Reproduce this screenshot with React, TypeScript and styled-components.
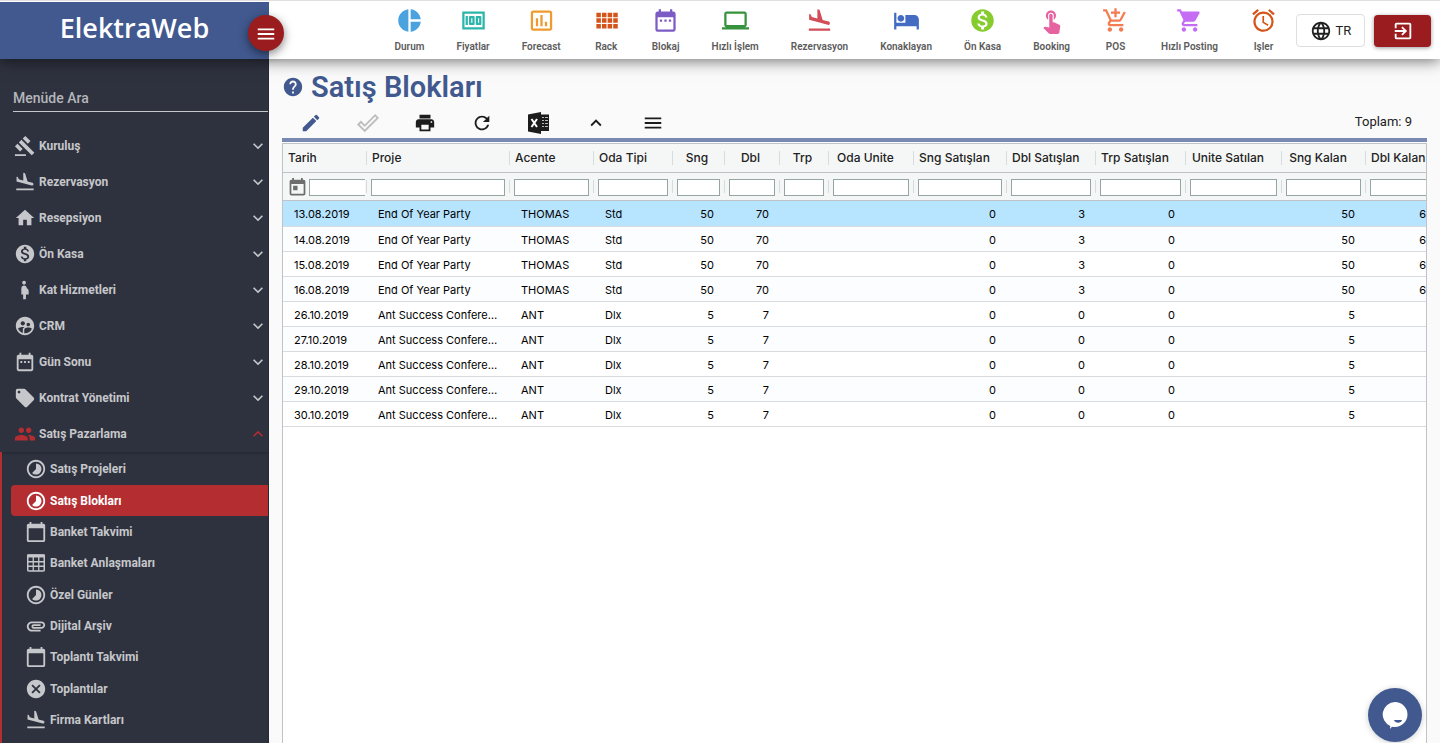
import React from "react";
import styled, { createGlobalStyle, css } from "styled-components";
import type { IconType } from "react-icons";
import {
  MdAccessAlarm, MdAddShoppingCart, MdAttachment, MdCalendarToday, MdCancel, MdDateRange, MdDoneOutline,
  MdEdit, MdExitToApp, MdFlightLand, MdGavel, MdHelp, MdHome, MdHotel, MdInsertChartOutlined,
  MdKeyboardArrowDown, MdKeyboardArrowUp, MdLanguage, MdLaptop, MdLocalOffer, MdMenu, MdMoney,
  MdMonetizationOn, MdPeople, MdPregnantWoman, MdPrint, MdRefresh, MdShoppingCart,
  MdSupervisedUserCircle, MdTimelapse, MdToday, MdTouchApp,
} from "react-icons/md";

const navy = "#41598f";
const red = "#9b1c1f";
const accent = "#b32d31";

const GlobalStyle = createGlobalStyle`
  *, *::before, *::after { box-sizing: border-box; }
  body { margin: 0; font-family: Roboto, "Liberation Sans", sans-serif; background: #fafafa; color: #212121; }
  button, input { font: inherit; color: inherit; }
  button { cursor: pointer; padding: 0; border: 0; background: none; }
  a { color: inherit; text-decoration: none; }
  ul { list-style: none; margin: 0; padding: 0; }
`;

const Shell = styled.div`
  display: flex;
  flex-direction: column;
  height: 100vh;
  overflow: hidden;
`;

const TopBar = styled.header`
  position: relative;
  z-index: 2;
  display: flex;
  flex: none;
  height: 59px;
  background: #fff;
  border-top: 1px solid #e0e0e0;
  box-shadow: 0 2px 14px rgba(0, 0, 0, 0.55);
`;

const Brand = styled.div`
  position: relative;
  display: flex;
  flex: none;
  justify-content: center;
  width: 269px;
  margin-top: 1px;
  background: ${navy};
`;

const BrandName = styled.span`
  font: 600 27px/51px "Open Sans", sans-serif;
  color: #fff;
`;

const MenuToggle = styled.button`
  position: absolute;
  right: -15px;
  top: 13px;
  display: grid;
  place-items: center;
  width: 36px;
  height: 36px;
  padding-top: 2px;
  border-radius: 50%;
  background: ${red};
  color: #fff;
  box-shadow: 0 3px 10px rgba(0, 0, 0, 0.5);
`;

const Shortcuts = styled.nav`
  display: flex;
  flex: 1;
  justify-content: flex-end;
  gap: 32px;
  padding: 6px 19px 0 0;
`;

const Shortcut = styled.a<{ $color: string }>`
  display: flex;
  flex-direction: column;
  align-items: center;
  gap: 7px;
  font-size: 10px;
  font-weight: 600;
  line-height: 12px;
  color: #5c5c5c;
  white-space: nowrap;
  svg { color: ${(p) => p.$color}; }
`;

const TopActions = styled.div`
  display: flex;
  flex: none;
  gap: 9px;
  padding: 13px 9px 0 0;
`;

const LanguageButton = styled.button`
  display: flex;
  align-items: center;
  justify-content: center;
  gap: 4px;
  width: 69px;
  height: 33px;
  border: 1px solid #dedede;
  border-radius: 4px;
  font-size: 13px;
`;

const ExitButton = styled.button`
  display: grid;
  place-items: center;
  width: 57px;
  height: 32px;
  margin-top: 1px;
  border-radius: 4px;
  background: ${red};
  color: #fff;
  box-shadow: 0 1px 4px rgba(0, 0, 0, 0.4);
`;

const Body = styled.div`
  display: flex;
  flex: 1;
  min-height: 0;
`;

const Sidebar = styled.aside`
  flex: none;
  width: 269px;
  overflow: hidden;
  background: #2e323f;
  color: #c6c7ca;
  border-right: 1px solid #262a35;
`;

const MenuSearch = styled.input`
  display: block;
  width: 255px;
  height: 29px;
  margin: 24px 0 16px 13px;
  padding: 2px 0 0;
  border: 0;
  border-bottom: 1px solid #c6c7ca;
  outline: 0;
  background: none;
  font-size: 14px;
  font-weight: 500;
  &::placeholder { color: #b5b6ba; opacity: 1; }
`;

const MenuLink = styled.a<{ $open?: boolean }>`
  display: flex;
  align-items: center;
  gap: 3px;
  height: 36px;
  padding-left: 14px;
  font-size: 12px;
  font-weight: 700;
  ${(p) => p.$open && css`svg { color: ${accent}; }`}
`;

const MenuLabel = styled.span`
  flex: 1;
`;

const SubMenu = styled.ul`
  border-left: 2px solid ${accent};
  padding: 1px 0 9px 9px;
  box-shadow: inset 0 2px 2px rgba(0, 0, 0, 0.15);
`;

const SubLink = styled.a<{ $active?: boolean }>`
  display: flex;
  align-items: center;
  gap: 3px;
  height: 31px;
  padding-left: 14px;
  border-radius: 4px 0 0 4px;
  font-size: 12px;
  font-weight: 700;
  ${(p) => p.$active && css`background: ${accent}; color: #fff;`}
`;

const SubItem = styled.li`
  &:nth-child(3n + 1) { padding-bottom: 1px; }
`;

const Main = styled.main`
  display: flex;
  flex: 1;
  flex-direction: column;
  min-width: 0;
  padding: 9px 13px 0;
`;

const Heading = styled.div`
  display: flex;
  align-items: center;
  gap: 7px;
  height: 37px;
  color: ${navy};
`;

const Title = styled.h1`
  margin: 0;
  font-size: 29px;
  font-weight: 600;
  line-height: 38px;
`;

const Toolbar = styled.div`
  display: flex;
  align-items: center;
  justify-content: space-between;
  height: 37px;
  padding-right: 15px;
  border-bottom: 4px solid #788ab2;
`;

const Tools = styled.div`
  display: flex;
  padding-top: 2px;
`;

const Tool = styled.button<{ $color?: string }>`
  display: grid;
  place-items: center;
  width: 57px;
  height: 31px;
  color: ${(p) => p.$color ?? "#1c1c1c"};
`;

const Total = styled.span`
  font-size: 13px;
`;

const GridFrame = styled.div`
  flex: 1;
  min-height: 0;
  margin-top: 1px;
  overflow: hidden;
  border: 1px solid #bdc3c7;
  border-bottom: 0;
  background: #fff;
`;

const Grid = styled.table`
  width: 1154px;
  border-collapse: collapse;
  table-layout: fixed;
  font-family: Inter, "Liberation Sans", sans-serif;
  font-size: 11px;
  color: #000;
`;

const HeadRow = styled.tr`
  height: 28px;
  background: #f5f7f7;
  border-bottom: 1px solid #bdc3c7;
`;

const HeadCell = styled.th<{ $align?: string; $gutter?: number }>`
  position: relative;
  padding: 0 ${(p) => p.$gutter ?? 5}px 0 5px;
  font-size: 12px;
  font-weight: 500;
  text-align: ${(p) => p.$align ?? "left"};
  white-space: nowrap;
  color: #222;
  &::after {
    content: "";
    position: absolute;
    right: 0;
    top: 7px;
    bottom: 7px;
    border-right: 1px solid #d9dcde;
  }
`;

const FilterBox = styled.div`
  display: flex;
  align-items: center;
  gap: 1px;
  margin-right: -3px;
  color: #6d6d6d;
  svg { flex: none; }
`;

const FilterInput = styled.input`
  flex: 1;
  min-width: 0;
  width: 100%;
  height: 17px;
  padding: 0 2px;
  border: 1px solid #95a5a6;
  background: #fff;
  font-size: 11px;
`;

const DateFilterInput = styled(FilterInput)`
  border-right: 0;
`;

const FilterCell = styled(HeadCell)`
  padding: 2px 5px 0 4px;
`;

const Row = styled.tr<{ $selected?: boolean }>`
  height: ${(p) => (p.$selected ? 26 : 25)}px;
  border-bottom: 1px solid #d9dcde;
  &:nth-child(even) { background: #fcfdfe; }
  ${(p) => p.$selected && css`background: #b7e4ff;`}
`;

const Cell = styled.td<{ $align: string }>`
  padding: 2px 11px 0;
  overflow: hidden;
  text-align: ${(p) => p.$align};
  text-overflow: ellipsis;
  white-space: nowrap;
`;

const ChatButton = styled.button`
  position: fixed;
  right: 18px;
  bottom: 1px;
  z-index: 3;
  display: grid;
  place-items: center;
  width: 54px;
  height: 54px;
  border-radius: 50%;
  background: ${navy};
  box-shadow: 0 1px 6px rgba(0, 0, 0, 0.2);
`;

const PieIcon = () => (
  <svg width="27" height="27" viewBox="0 0 24 24" fill="currentColor" aria-hidden="true">
    <path d="M11 2v20c-5.07-.5-9-4.79-9-10s3.93-9.5 9-10zm2.03 0v8.99H22c-.47-4.74-4.24-8.52-8.97-8.99zm0 11.01V22c4.74-.47 8.5-4.25 8.97-8.99h-8.97z" />
  </svg>
);

const RackIcon = () => (
  <svg width="27" height="27" viewBox="0 0 24 24" fill="currentColor" aria-hidden="true">
    <path d="M3 9h4V5H3v4zm0 5h4v-4H3v4zm5 0h4v-4H8v4zm5 0h4v-4h-4v4zM8 9h4V5H8v4zm5-4v4h4V5h-4zm5 9h4v-4h-4v4zM3 19h4v-4H3v4zm5 0h4v-4H8v4zm5 0h4v-4h-4v4zm5 0h4v-4h-4v4zm0-14v4h4V5h-4z" />
  </svg>
);

const SheetIcon = () => (
  <svg width="22" height="22" viewBox="0 0 22 22" fill="none" stroke="currentColor" aria-hidden="true">
    <rect x="2.75" y="3" width="16.500" height="16" rx="1" strokeWidth="1.500" />
    <path d="M2 4h18" strokeWidth="3" />
    <path d="M2 9.750h18M2 14.250h18M8.250 5v14M13.750 5v14" strokeWidth="1.300" />
  </svg>
);

const ExcelIcon = () => (
  <svg width="22" height="22" viewBox="0 0 22 22" aria-hidden="true">
    <path d="M0 2.500 13 0v22L0 19.500z" fill="#1c1c1c" />
    <path d="M13 2.500h8v16.500h-8z" fill="#1c1c1c" />
    <path d="M14 5.500h2m1 0h3m-6 3h2m1 0h3m-6 3h2m1 0h3m-6 3h2m1 0h3" stroke="#b9b9b9" strokeWidth="1" />
    <path d="m3.500 7 5.500 8M9 7l-5.500 8" stroke="#fff" strokeWidth="2" />
  </svg>
);

const ChatIcon = () => (
  <svg width="28" height="28" viewBox="0 0 28 28" aria-hidden="true">
    <path d="M14 1a12.500 12.500 0 0 1 0 25c-1 0-2 0-3-.3L9 28l.3-3A12.500 12.500 0 0 1 14 1z" fill="#fff" />
    <path d="M13 19h8c-.5 3.500-7 3.500-8 0z" fill={navy} />
  </svg>
);

const shortcuts: { label: string; color: string; icon: IconType | React.FC }[] = [
  { label: "Durum", color: "#4aa3df", icon: PieIcon },
  { label: "Fiyatlar", color: "#2bb5ab", icon: MdMoney },
  { label: "Forecast", color: "#ef9a2d", icon: MdInsertChartOutlined },
  { label: "Rack", color: "#d4541a", icon: RackIcon },
  { label: "Blokaj", color: "#7c5cc4", icon: MdDateRange },
  { label: "Hızlı İşlem", color: "#35923d", icon: MdLaptop },
  { label: "Rezervasyon", color: "#d24d57", icon: MdFlightLand },
  { label: "Konaklayan", color: "#446cc3", icon: MdHotel },
  { label: "Ön Kasa", color: "#87cc2f", icon: MdMonetizationOn },
  { label: "Booking", color: "#e663a0", icon: MdTouchApp },
  { label: "POS", color: "#f47b52", icon: MdAddShoppingCart },
  { label: "Hızlı Posting", color: "#c56cf5", icon: MdShoppingCart },
  { label: "Işler", color: "#d4541a", icon: MdAccessAlarm },
];

const menu: { label: string; icon: IconType; open?: boolean }[] = [
  { label: "Kuruluş", icon: MdGavel },
  { label: "Rezervasyon", icon: MdFlightLand },
  { label: "Resepsiyon", icon: MdHome },
  { label: "Ön Kasa", icon: MdMonetizationOn },
  { label: "Kat Hizmetleri", icon: MdPregnantWoman },
  { label: "CRM", icon: MdSupervisedUserCircle },
  { label: "Gün Sonu", icon: MdDateRange },
  { label: "Kontrat Yönetimi", icon: MdLocalOffer },
  { label: "Satış Pazarlama", icon: MdPeople, open: true },
];

const subMenu: { label: string; icon: IconType | React.FC; active?: boolean }[] = [
  { label: "Satış Projeleri", icon: MdTimelapse },
  { label: "Satış Blokları", icon: MdTimelapse, active: true },
  { label: "Banket Takvimi", icon: MdCalendarToday },
  { label: "Banket Anlaşmaları", icon: SheetIcon },
  { label: "Özel Günler", icon: MdTimelapse },
  { label: "Dijital Arşiv", icon: MdAttachment },
  { label: "Toplantı Takvimi", icon: MdCalendarToday },
  { label: "Toplantılar", icon: MdCancel },
  { label: "Firma Kartları", icon: MdFlightLand },
];

const columns = [
  { label: "Tarih", width: 84 },
  { label: "Proje", width: 143 },
  { label: "Acente", width: 84 },
  { label: "Oda Tipi", width: 79 },
  { label: "Sng", width: 52, numeric: true },
  { label: "Dbl", width: 55, numeric: true },
  { label: "Trp", width: 49, numeric: true },
  { label: "Oda Unite", width: 85, numeric: true },
  { label: "Sng Satışlan", width: 93, numeric: true },
  { label: "Dbl Satışlan", width: 89, numeric: true },
  { label: "Trp Satışlan", width: 90, numeric: true },
  { label: "Unite Satılan", width: 96, numeric: true },
  { label: "Sng Kalan", width: 84, numeric: true },
  { label: "Dbl Kalan", width: 71, numeric: true },
];

const gutterOf = (c: { width: number; numeric?: boolean }) => (!c.numeric ? 5 : c.width < 60 ? 9 : 17);

const party = ["End Of Year Party", "THOMAS", "Std", "50", "70", "", "", "0", "3", "0", "", "50", "6"];
const conference = ["Ant Success Conference", "ANT", "Dlx", "5", "7", "", "", "0", "0", "0", "", "5", ""];
const rows = [
  ...["13.08.2019", "14.08.2019", "15.08.2019", "16.08.2019"].map((date) => [date, ...party]),
  ...["26.10.2019", "27.10.2019", "28.10.2019", "29.10.2019", "30.10.2019"].map((date) => [date, ...conference]),
];

export default function App() {
  return (
    <>
      <GlobalStyle />
      <Shell>
        <TopBar>
          <Brand>
            <BrandName>ElektraWeb</BrandName>
            <MenuToggle aria-label="Menü"><MdMenu size={22} /></MenuToggle>
          </Brand>
          <Shortcuts>
            {shortcuts.map(({ label, color, icon: Icon }) => (
              <Shortcut key={label} href="#" $color={color}>
                <Icon size={27} />
                {label}
              </Shortcut>
            ))}
          </Shortcuts>
          <TopActions>
            <LanguageButton><MdLanguage size={22} />TR</LanguageButton>
            <ExitButton aria-label="Çıkış"><MdExitToApp size={22} /></ExitButton>
          </TopActions>
        </TopBar>
        <Body>
          <Sidebar>
            <MenuSearch aria-label="Menüde Ara" placeholder="Menüde Ara" />
            <ul>
              {menu.map(({ label, icon: Icon, open }) => (
                <li key={label}>
                  <MenuLink href="#" $open={open}>
                    <Icon size={22} />
                    <MenuLabel>{label}</MenuLabel>
                    {open ? <MdKeyboardArrowUp size={20} /> : <MdKeyboardArrowDown size={20} />}
                  </MenuLink>
                </li>
              ))}
            </ul>
            <SubMenu>
              {subMenu.map(({ label, icon: Icon, active }) => (
                <SubItem key={label}>
                  <SubLink href="#" $active={active}><Icon size={22} />{label}</SubLink>
                </SubItem>
              ))}
            </SubMenu>
          </Sidebar>
          <Main>
            <Heading>
              <MdHelp size={22} />
              <Title>Satış Blokları</Title>
            </Heading>
            <Toolbar>
              <Tools>
                <Tool aria-label="Düzenle" $color={navy}><MdEdit size={22} /></Tool>
                <Tool aria-label="Onayla" $color="#bdbdbd"><MdDoneOutline size={22} /></Tool>
                <Tool aria-label="Yazdır"><MdPrint size={22} /></Tool>
                <Tool aria-label="Yenile"><MdRefresh size={22} /></Tool>
                <Tool aria-label="Excel"><ExcelIcon /></Tool>
                <Tool aria-label="Daralt"><MdKeyboardArrowUp size={22} /></Tool>
                <Tool aria-label="Seçenekler"><MdMenu size={22} /></Tool>
              </Tools>
              <Total>Toplam: 9</Total>
            </Toolbar>
            <GridFrame>
              <Grid>
                <colgroup>
                  {columns.map((c) => <col key={c.label} style={{ width: c.width }} />)}
                </colgroup>
                <thead>
                  <HeadRow>
                    {columns.map((c) => (
                      <HeadCell key={c.label} scope="col" $align={c.numeric ? "center" : "left"} $gutter={gutterOf(c)}>
                        {c.label}
                      </HeadCell>
                    ))}
                  </HeadRow>
                  <HeadRow>
                    {columns.map((c, i) => (
                      <FilterCell key={c.label}>
                        {i === 0 ? (
                          <FilterBox><MdToday size={21} /><DateFilterInput aria-label={c.label} /></FilterBox>
                        ) : (
                          <FilterInput aria-label={c.label} />
                        )}
                      </FilterCell>
                    ))}
                  </HeadRow>
                </thead>
                <tbody>
                  {rows.map((row, r) => (
                    <Row key={row[0]} $selected={r === 0}>
                      {row.map((value, i) => (
                        <Cell key={columns[i].label} $align={columns[i].numeric ? "right" : "left"}>{value}</Cell>
                      ))}
                    </Row>
                  ))}
                </tbody>
              </Grid>
            </GridFrame>
          </Main>
        </Body>
      </Shell>
      <ChatButton aria-label="Sohbet"><ChatIcon /></ChatButton>
    </>
  );
}
